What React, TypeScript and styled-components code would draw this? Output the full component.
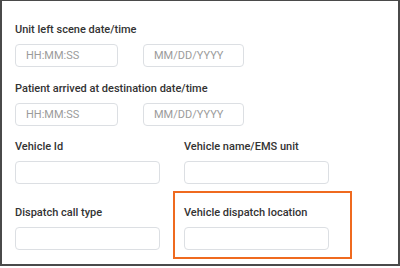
import React from "react";
import styled, { createGlobalStyle } from "styled-components";

const GlobalStyle = createGlobalStyle`
  html, body {
    margin: 0;
    padding: 0;
    background: #ffffff;
  }
  * {
    box-sizing: border-box;
  }
`;

const Frame = styled.div`
  width: 400px;
  height: 266px;
  border: 2px solid #4a4a4a;
  border-top-width: 1px;
  background: #ffffff;
  padding: 22px 0 0 13px;
  font-family: Roboto, "Liberation Sans", sans-serif;
  overflow: hidden;
`;

const Group = styled.div<{ $top?: number }>`
  margin-top: ${(p) => p.$top || 0}px;
`;

const Label = styled.div`
  font-size: 11px;
  line-height: 13px;
  font-weight: 500;
  color: #333333;
  margin-bottom: 8px;
  white-space: nowrap;
`;

const InputRow = styled.div<{ $cols: string; $gap: number }>`
  display: grid;
  grid-template-columns: ${(p) => p.$cols};
  column-gap: ${(p) => p.$gap}px;
`;

const Field = styled.div<{ $highlight?: boolean }>`
  position: relative;
  &::before {
    content: "";
    display: ${(p) => (p.$highlight ? "block" : "none")};
    position: absolute;
    top: -15px;
    left: -11px;
    right: -23px;
    bottom: -9px;
    border: 2px solid #ef6a1f;
    pointer-events: none;
  }
`;

const Input = styled.input`
  display: block;
  width: 100%;
  height: 23px;
  border: 1px solid #dcdfe3;
  border-radius: 4px;
  padding: 0 0 0 10px;
  margin: 0;
  font-family: Roboto, "Liberation Sans", sans-serif;
  font-size: 11px;
  color: #333333;
  background: #ffffff;
  outline: none;
  &::placeholder {
    color: #9b9b9b;
  }
`;

const App: React.FC = () => {
  return (
    <>
      <GlobalStyle />
      <Frame>
        <Group>
          <Label>Unit left scene date/time</Label>
          <InputRow $cols="103px 101px" $gap={25}>
            <Input placeholder="HH:MM:SS" />
            <Input placeholder="MM/DD/YYYY" />
          </InputRow>
        </Group>
        <Group $top={15}>
          <Label>Patient arrived at destination date/time</Label>
          <InputRow $cols="103px 101px" $gap={25}>
            <Input placeholder="HH:MM:SS" />
            <Input placeholder="MM/DD/YYYY" />
          </InputRow>
        </Group>
        <Group $top={14}>
          <InputRow $cols="145px 145px" $gap={24}>
            <Field>
              <Label>Vehicle Id</Label>
              <Input />
            </Field>
            <Field>
              <Label>Vehicle name/EMS unit</Label>
              <Input />
            </Field>
          </InputRow>
        </Group>
        <Group $top={22}>
          <InputRow $cols="145px 145px" $gap={24}>
            <Field>
              <Label>Dispatch call type</Label>
              <Input />
            </Field>
            <Field $highlight>
              <Label>Vehicle dispatch location</Label>
              <Input />
            </Field>
          </InputRow>
        </Group>
      </Frame>
    </>
  );
};

export default App;
